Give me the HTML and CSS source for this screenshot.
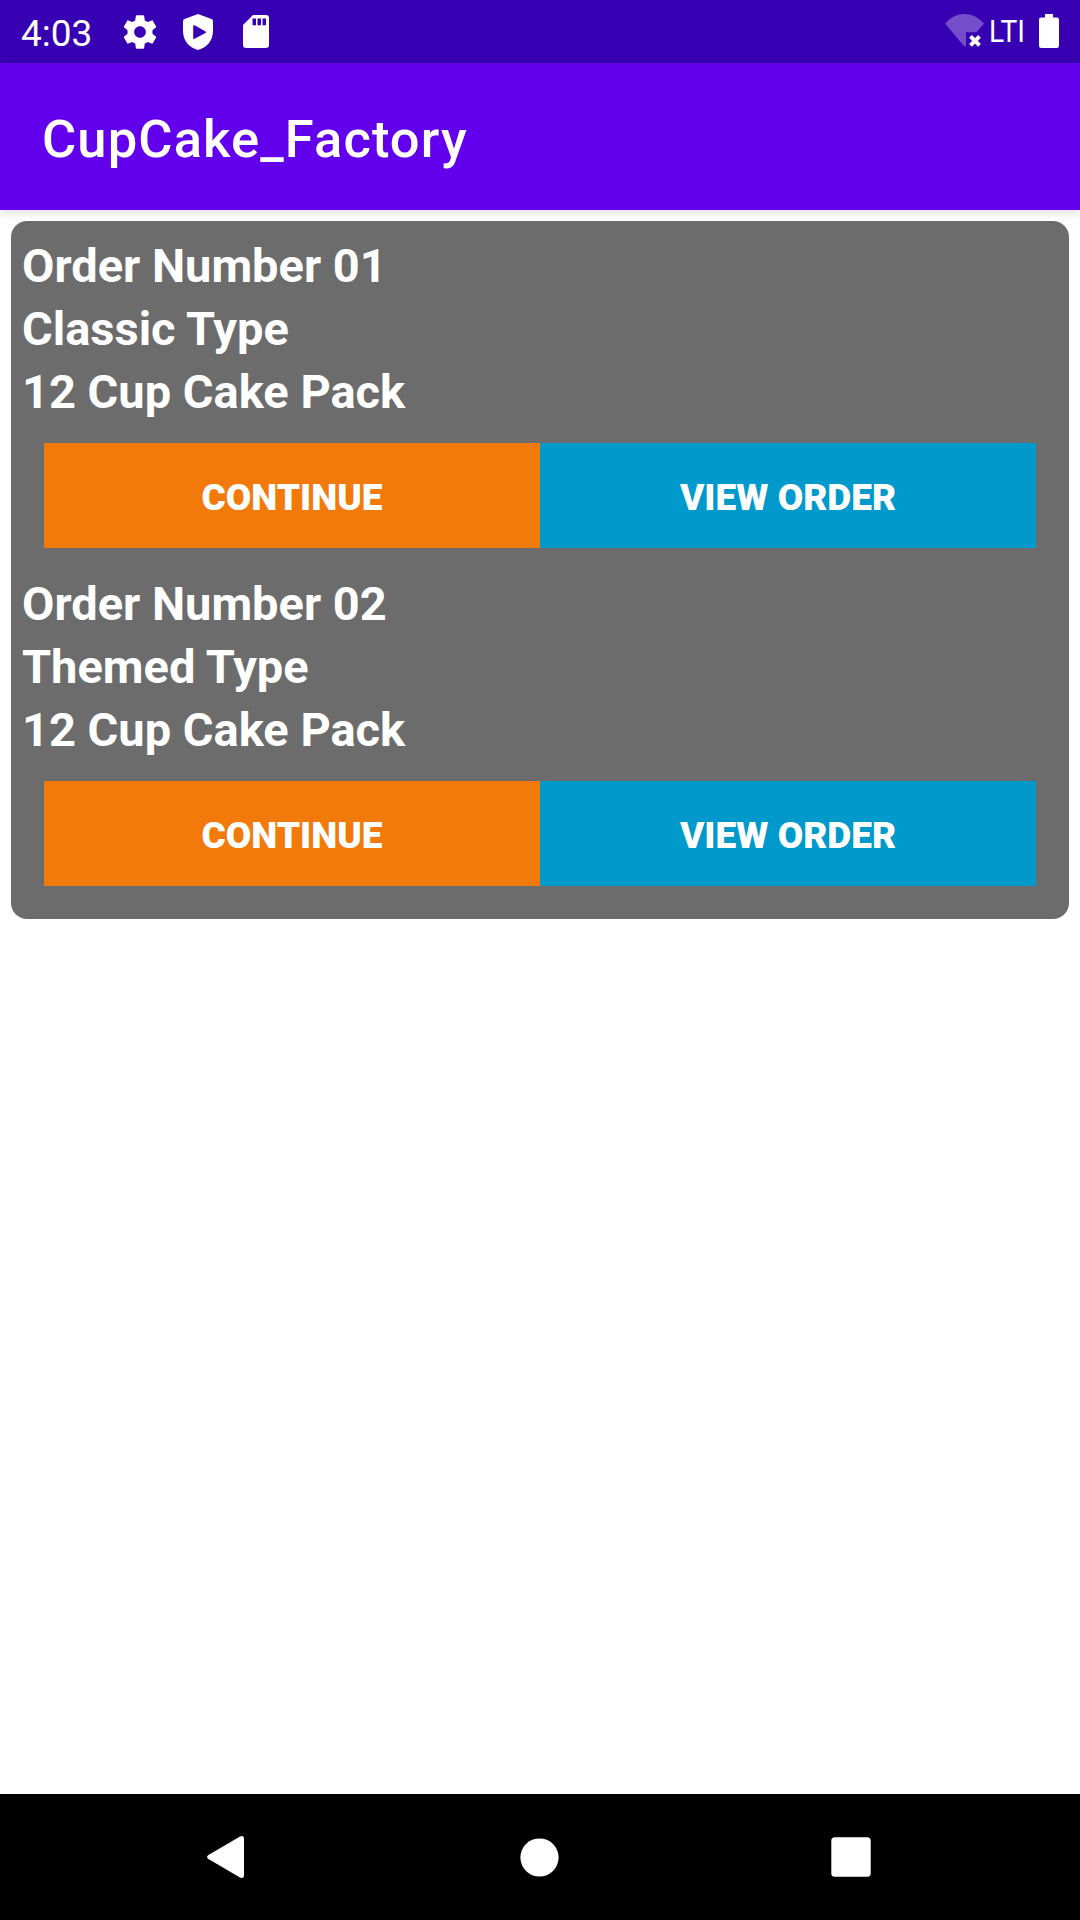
FILE: index.html
```
<!DOCTYPE html>
<html lang="en">
<head>
<meta charset="utf-8">
<title>CupCake_Factory</title>
<link rel="stylesheet" href="styles.css">
</head>
<body>
<div class="screen">
  <div class="status-bar">
    <span class="clock">4:03</span>
    <div class="notifications">
      <svg class="gear" width="40" height="40" viewBox="0 0 24 24"><path d="M19.43 12.98c.04-.32.07-.64.07-.98s-.03-.66-.07-.98l2.11-1.65c.19-.15.24-.42.12-.64l-2-3.46c-.12-.22-.39-.3-.61-.22l-2.49 1c-.52-.4-1.08-.73-1.69-.98l-.38-2.65C14.46 2.18 14.25 2 14 2h-4c-.25 0-.46.18-.49.42l-.38 2.65c-.61.25-1.17.59-1.69.98l-2.49-1c-.23-.09-.49 0-.61.22l-2 3.46c-.13.22-.07.49.12.64l2.11 1.65c-.04.32-.07.65-.07.98s.03.66.07.98l-2.11 1.65c-.19.15-.24.42-.12.64l2 3.46c.12.22.39.3.61.22l2.49-1c.52.4 1.08.73 1.69.98l.38 2.65c.03.24.24.42.49.42h4c.25 0 .46-.18.49-.42l.38-2.65c.61-.25 1.17-.59 1.69-.98l2.49 1c.23.09.49 0 .61-.22l2-3.46c.12-.22.07-.49-.12-.64l-2.11-1.65zM12 15.5c-1.93 0-3.5-1.57-3.5-3.5s1.57-3.5 3.5-3.5 3.5 1.57 3.5 3.5-1.57 3.5-3.5 3.5z"/></svg>
      <svg class="shield" width="30" height="36" viewBox="0 0 30 36"><path fill-rule="evenodd" d="M15 0 28.500 5Q30 5.600 30 7V17C30 26 24.500 33.500 15 36C5.500 33.500 0 26 0 17V7Q0 5.600 1.500 5ZM10.200 12V24.400Q10.400 25.400 11.500 24.800L22.600 18.900Q23.600 18.200 22.600 17.500L11.500 11.300Q10.400 10.800 10.200 12Z"/></svg>
      <svg class="sd-card" width="26" height="33" viewBox="0 0 26 33"><path fill-rule="evenodd" d="M10 0H23Q26 0 26 3V30Q26 33 23 33H3Q0 33 0 30V10ZM9.500 3.500V10.200H13V3.500ZM14.500 3.500V10.200H18V3.500ZM19.500 3.500V10.200H23V3.500Z"/></svg>
    </div>
    <div class="indicators">
      <svg class="wifi" width="39" height="34" viewBox="0 0 39 34"><path class="wifi-fan" d="M0 9.500Q8 0 19.500 0T39 9.500L31.500 18.200H21V31.500Q20 33.500 18.500 31.500Z"/><path class="wifi-cross" d="M25.500 22.300 34.500 31.300M34.500 22.300 25.500 31.300"/></svg>
      <span class="network">LTI</span>
      <svg class="battery" width="20" height="34" viewBox="0 0 20 34"><path d="M6 0H14V3.400H17.800Q20 3.400 20 5.600V31.800Q20 34 17.800 34H2.200Q0 34 0 31.800V5.600Q0 3.400 2.200 3.400H6Z"/></svg>
    </div>
  </div>
  <header class="app-bar"><h1 class="title">CupCake_Factory</h1></header>
  <main class="content">
    <div class="orders">
      <section class="order">
        <p class="line">Order Number 01</p>
        <p class="line">Classic Type</p>
        <p class="line">12 Cup Cake Pack</p>
        <div class="actions">
          <button class="button continue">CONTINUE</button>
          <button class="button view">VIEW ORDER</button>
        </div>
      </section>
      <section class="order">
        <p class="line">Order Number 02</p>
        <p class="line">Themed Type</p>
        <p class="line">12 Cup Cake Pack</p>
        <div class="actions">
          <button class="button continue">CONTINUE</button>
          <button class="button view">VIEW ORDER</button>
        </div>
      </section>
    </div>
  </main>
  <nav class="nav-bar">
    <svg class="back" width="37" height="42" viewBox="0 0 37 42"><path d="M33 .4Q37-1 37 3V39Q37 43 33 41.600L1 22.800Q-.8 21 1 19.200Z"/></svg>
    <svg class="home" width="39" height="39" viewBox="0 0 39 39"><circle cx="19.500" cy="19.500" r="19.100"/></svg>
    <svg class="recents" width="40" height="40" viewBox="0 0 40 40"><rect x=".3" y=".3" width="39.400" height="39.400" rx="3.500"/></svg>
  </nav>
</div>
</body>
</html>
```
FILE: styles.css
```
* {
  box-sizing: border-box;
}

body {
  margin: 0;
  background: #fff;
  color: #fff;
  font-family: Roboto, sans-serif;
}

svg {
  display: block;
  flex: none;
  fill: #fff;
}

.screen {
  display: flex;
  flex-direction: column;
  width: 1080px;
  height: 1920px;
  overflow: hidden;
}

.status-bar {
  display: flex;
  align-items: flex-start;
  height: 63px;
  padding: 0 21px;
  background: #3700b3;
}

.clock {
  width: 99px;
  padding-top: 12px;
  font-size: 37px;
  line-height: 44px;
}

.notifications {
  display: flex;
  align-items: flex-start;
}

.gear {
  margin-top: 12px;
}

.shield {
  margin: 14px 30px 0 23px;
}

.sd-card {
  margin-top: 15px;
}

.indicators {
  display: flex;
  align-items: flex-start;
  margin-left: auto;
}

.wifi {
  margin-top: 14px;
}

.wifi-fan {
  opacity: 0.3;
}

.wifi-cross {
  fill: none;
  stroke: #fff;
  stroke-width: 4;
}

.network {
  width: 50px;
  margin-left: 5px;
  padding-top: 12px;
  font-size: 32px;
  line-height: 38px;
  letter-spacing: 0;
  transform: scaleX(0.88);
  transform-origin: left;
}

.battery {
  margin-top: 14px;
}

.app-bar {
  display: flex;
  align-items: center;
  height: 147px;
  padding: 4px 42px 0;
  background: #6200ee;
  box-shadow: 0 2px 10px rgba(0, 0, 0, 0.15);
}

.title {
  margin: 0;
  font-size: 52.5px;
  font-weight: 500;
  line-height: 62px;
  letter-spacing: 1.1px;
}

.content {
  flex: 1;
  padding: 11px;
}

.orders {
  padding: 13px 11px 33px;
  border-radius: 16px;
  background: #6c6c6c;
}

.order + .order {
  margin-top: 24px;
}

.line {
  margin: 0;
  font-size: 47px;
  font-weight: 700;
  line-height: 63px;
}

.actions {
  display: flex;
  padding: 20px 22px 0;
}

.button {
  flex: 1;
  height: 105px;
  padding: 5px 0 0;
  border: 0;
  color: #fff;
  font: 900 37px/44px Roboto, sans-serif;
}

.continue {
  background: #f27a0a;
}

.view {
  background: #0099cc;
}

.nav-bar {
  display: flex;
  align-items: center;
  height: 126px;
  padding: 0 207px;
  background: #000;
}

.home {
  margin: 0 271.5px 0 276px;
}
```
